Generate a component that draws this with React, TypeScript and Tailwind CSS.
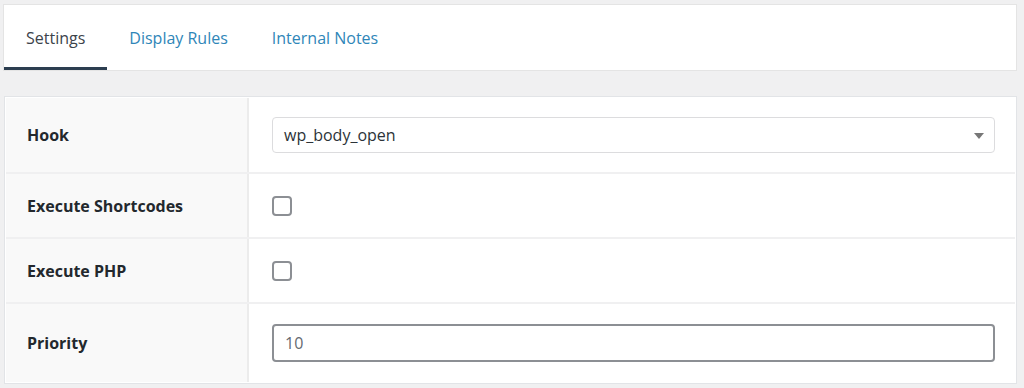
import { useState } from "react";

const font = { fontFamily: '"Open Sans", "Noto Sans", sans-serif' };

const tabs = ["Settings", "Display Rules", "Internal Notes"];

const Row = ({ label, h, children }: { label: string; h: string; children: React.ReactNode }) => (
  <div className={`flex ${h} border-b-2 border-[#f0f0f1] last:border-b-0`}>
    <div className="w-[243px] shrink-0 bg-[#f9f9f9] border-r-2 border-[#ececec] flex items-center pl-[21px] text-[16px] font-bold text-[#23282d]">
      {label}
    </div>
    <div className="flex-1 flex items-center pl-[23px] pr-[20px]">{children}</div>
  </div>
);

const Checkbox = () => (
  <span className="block w-[20px] h-[20px] rounded-[4px] border-2 border-[#8c8f94] bg-white" />
);

export default function App() {
  const [active] = useState(0);
  return (
    <div className="w-[1024px] h-[388px] bg-[#f0f0f1] pt-[4px] overflow-hidden" style={font}>
      <div className="ml-[3px] w-[1014px] h-[67px] bg-white border border-[#e4e4e4] flex items-stretch">
        {tabs.map((t, i) => (
          <div
            key={t}
            className={`px-[22px] flex items-center text-[16px] pt-[4px] border-b-[3px] ${
              i === active ? "border-[#2c3e50] text-[#3c434a]" : "border-transparent text-[#2f86b8]"
            }`}
          >
            {t}
          </div>
        ))}
      </div>
      <div className="mt-[25px] ml-[4px] w-[1013px] bg-white border border-[#e2e4e7] p-[1px]">
        <Row label="Hook" h="h-[76px]">
          <div className="relative w-full h-[36px] rounded-[4px] border border-[#dcdcde] bg-white flex items-center pl-[11px] text-[16px] text-[#2c3338]">
            wp_body_open
            <svg className="absolute right-[10px] top-[15px]" width="10" height="6" viewBox="0 0 10 6">
              <path d="M0 0 L10 0 L5 6 Z" fill="#777" />
            </svg>
          </div>
        </Row>
        <Row label="Execute Shortcodes" h="h-[65px]">
          <Checkbox />
        </Row>
        <Row label="Execute PHP" h="h-[65px]">
          <Checkbox />
        </Row>
        <Row label="Priority" h="h-[78px]">
          <div className="w-full h-[38px] rounded-[4px] border-2 border-[#8c8f94] bg-white flex items-center pl-[11px] text-[16px] text-[#646970]">
            10
          </div>
        </Row>
      </div>
    </div>
  );
}
